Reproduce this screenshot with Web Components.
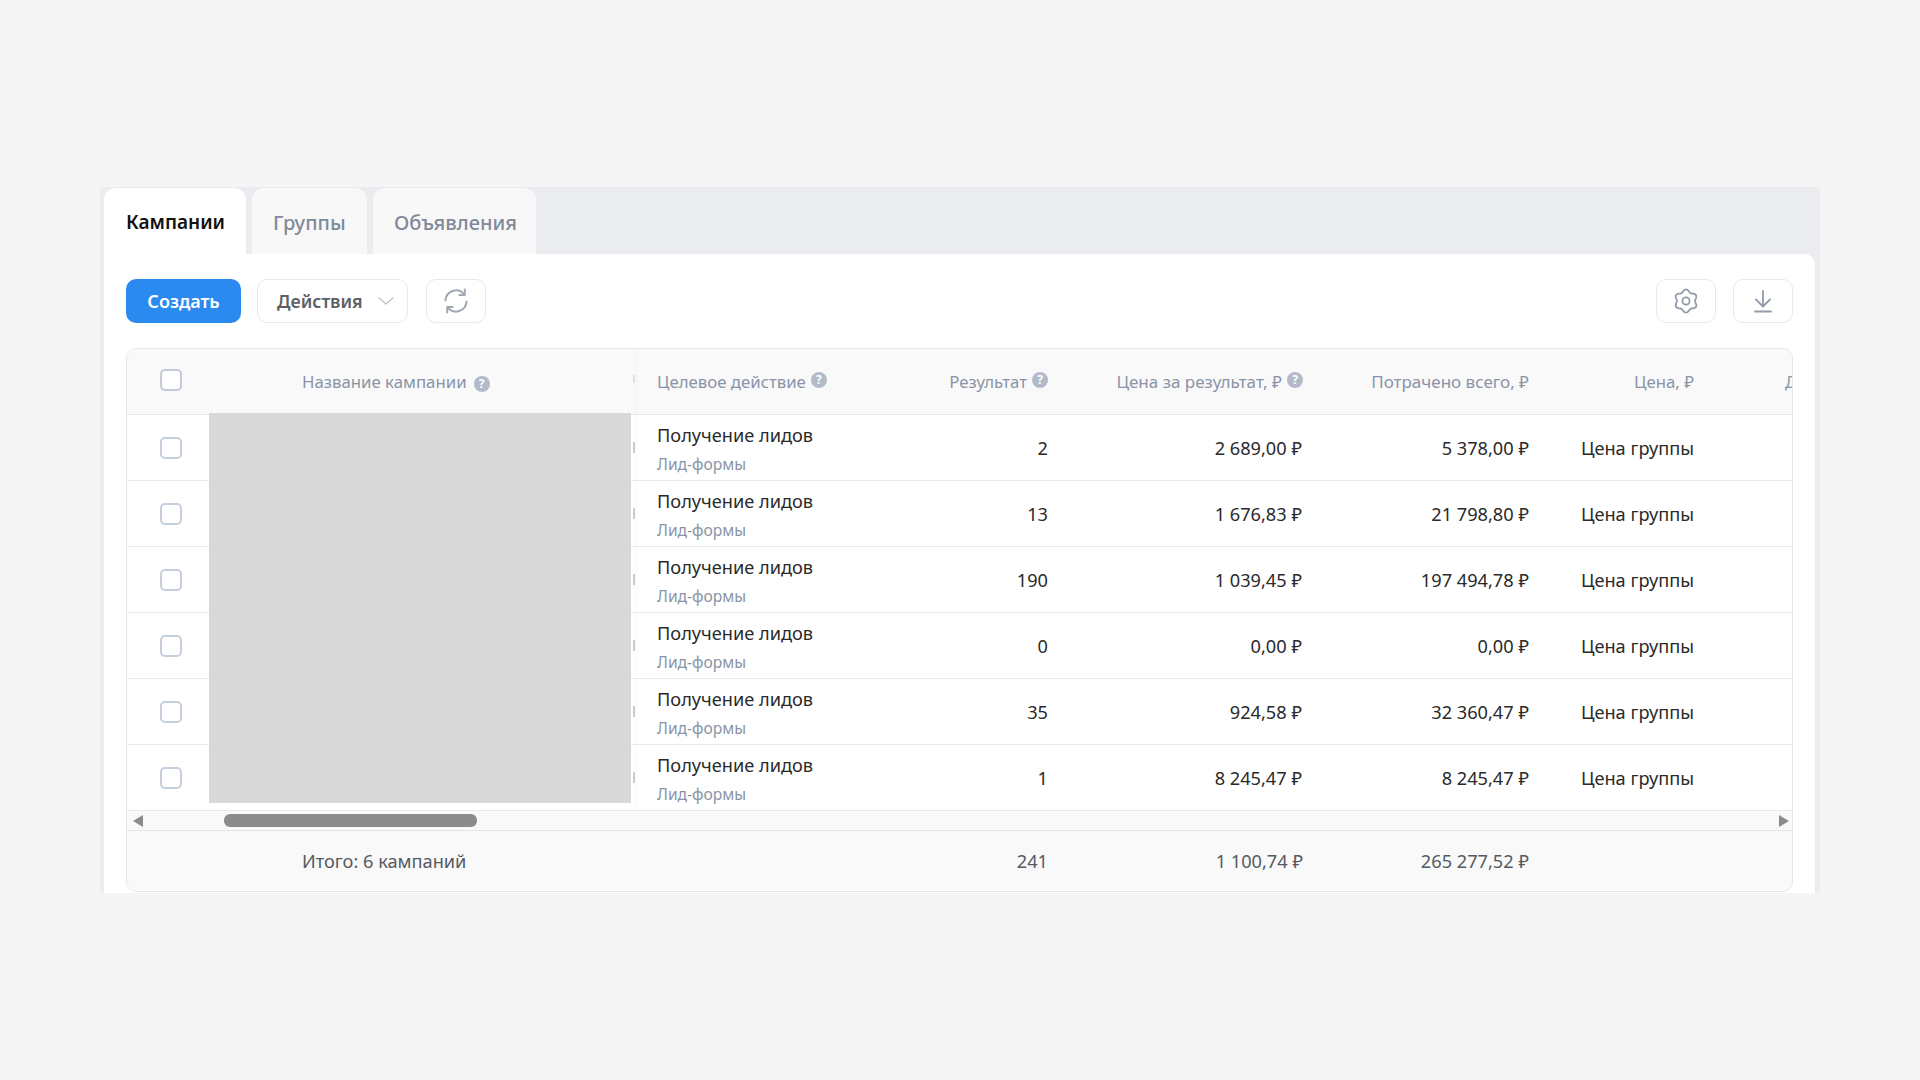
<!DOCTYPE html>
<html lang="ru">
<head>
<meta charset="utf-8">
<title>Кампании</title>
<style>
  html, body { margin: 0; padding: 0; background: #f5f5f6; }
  body { font-family: "Noto Sans", "Open Sans", sans-serif; height: 1080px; overflow: hidden; }
</style>
</head>
<body>
<ads-cabinet>
  <tab-strip slot="tabs"></tab-strip>
  <tool-bar slot="tools"></tool-bar>
  <campaign-table slot="table">
    <campaign-row result="2" price="2 689,00 ₽" spent="5 378,00 ₽"></campaign-row>
    <campaign-row result="13" price="1 676,83 ₽" spent="21 798,80 ₽"></campaign-row>
    <campaign-row result="190" price="1 039,45 ₽" spent="197 494,78 ₽"></campaign-row>
    <campaign-row result="0" price="0,00 ₽" spent="0,00 ₽"></campaign-row>
    <campaign-row result="35" price="924,58 ₽" spent="32 360,47 ₽"></campaign-row>
    <campaign-row result="1" price="8 245,47 ₽" spent="8 245,47 ₽"></campaign-row>
  </campaign-table>
</ads-cabinet>

<script>
const COLS = '82px 424px 2px 220px 217px 255px 226px 165px 1fr';

// gear outline: six soft lobes, one of them on top
function gearPath(cx, cy) {
    let d = '';
    for (let i = 0; i < 120; i++) {
        const a = i / 120 * Math.PI * 2;
        const r = 10.3 + 1.25 * Math.cos(6 * a);
        d += (i ? 'L' : 'M') + (cx + r * Math.sin(a)).toFixed(2) + ' ' + (cy - r * Math.cos(a)).toFixed(2);
    }
    return d + 'Z';
}

class AdsCabinet extends HTMLElement {
    constructor() {
        super();
        this.attachShadow({ mode: 'open' });
        this.shadowRoot.innerHTML = `
            <style>
                :host { display: block; margin: 187px 100px 0; width: 1720px; height: 706px; background: #ebecf0; }
                .panel {
                    margin: 0 5px 0 4px;
                    height: 639px;
                    box-sizing: border-box;
                    background: #fff;
                    border-radius: 0 10px 0 0;
                    padding: 25px 22px 0;
                    display: flex;
                    flex-direction: column;
                    gap: 25px;
                }
            </style>
            <slot name="tabs"></slot>
            <div class="panel">
                <slot name="tools"></slot>
                <slot name="table"></slot>
            </div>
        `;
    }
}
customElements.define('ads-cabinet', AdsCabinet);

class TabStrip extends HTMLElement {
    constructor() {
        super();
        this.attachShadow({ mode: 'open' });
        this.shadowRoot.innerHTML = `
            <style>
                :host { display: flex; gap: 6px; height: 67px; padding-left: 4px; align-items: flex-end; }
                div {
                    height: 66px;
                    box-sizing: border-box;
                    padding: 2px 0 0 21px;
                    display: flex;
                    align-items: center;
                    border-radius: 12px 12px 0 0;
                    background: #f8f8f9;
                    color: #808a9a;
                    font-size: 20px;
                    font-weight: 500;
                }
                .active { background: #fff; color: #111; font-size: 19px; font-weight: 600; padding-left: 22px; width: 142px; }
                .b { width: 115px; }
                .c { width: 163px; }
            </style>
            <div class="active">Кампании</div>
            <div class="b">Группы</div>
            <div class="c">Объявления</div>
        `;
    }
}
customElements.define('tab-strip', TabStrip);

class ToolBar extends HTMLElement {
    constructor() {
        super();
        this.attachShadow({ mode: 'open' });
        this.shadowRoot.innerHTML = `
            <style>
                :host { display: flex; height: 44px; align-items: stretch; }
                button {
                    font: inherit;
                    margin: 0;
                    padding: 0;
                    height: 44px;
                    box-sizing: border-box;
                    border: 1px solid #e6e8ec;
                    border-radius: 10px;
                    background: #fff;
                    display: flex;
                    align-items: center;
                    justify-content: center;
                }
                svg { display: block; fill: none; stroke: #929bab; stroke-width: 1.8; stroke-linecap: round; stroke-linejoin: round; }
                .create { width: 115px; background: #2a8aef; border: none; color: #fff; font-size: 18px; font-weight: 600; margin-right: 16px; }
                .actions { width: 151px; color: #5c5f66; font-size: 17.8px; font-weight: 600; gap: 14px; margin-right: 18px; justify-content: flex-start; padding-left: 19px; }
                .icon { width: 60px; }
                .spacer { flex: 1; }
                .settings { margin-right: 17px; }
            </style>
            <button class="create">Создать</button>
            <button class="actions">Действия
                <svg width="18" height="10" viewBox="0 0 18 10" style="stroke:#bfc4cd;stroke-width:1.5"><path d="M2 2l7 6 7-6"/></svg>
            </button>
            <button class="icon">
                <svg width="28" height="28" viewBox="0 0 28 28" style="stroke:#a0a8b5;stroke-width:2">
                    <path d="M3.5 13.5a10.5 10.5 0 0 1 18.6-6.2"/>
                    <path d="M22.8 2.6v5.4h-5.4"/>
                    <path d="M24.5 14.5a10.5 10.5 0 0 1-18.6 6.2"/>
                    <path d="M5.2 25.4V20h5.4"/>
                </svg>
            </button>
            <div class="spacer"></div>
            <button class="icon settings">
                <svg width="28" height="28" viewBox="0 0 28 28">
                    <path d="${gearPath(14, 14)}"/>
                    <circle cx="14" cy="14" r="3.6"/>
                </svg>
            </button>
            <button class="icon">
                <svg width="26" height="26" viewBox="0 0 26 26">
                    <path d="M13 3v15"/>
                    <path d="M6 11.5l7 7 7-7"/>
                    <path d="M5 23.5h16"/>
                </svg>
            </button>
        `;
    }
}
customElements.define('tool-bar', ToolBar);

class HelpMark extends HTMLElement {
    constructor() {
        super();
        this.attachShadow({ mode: 'open' });
        this.shadowRoot.innerHTML = `
            <style>
                :host {
                    display: inline-flex;
                    width: 16px;
                    height: 16px;
                    border-radius: 50%;
                    background: #b3bbc9;
                    color: #fff;
                    font-size: 12px;
                    font-weight: 700;
                    line-height: 16px;
                    align-items: center;
                    justify-content: center;
                    flex: none;
                }
            </style>?
        `;
    }
}
customElements.define('help-mark', HelpMark);

class CampaignRow extends HTMLElement {
    constructor() {
        super();
        this.attachShadow({ mode: 'open' });
        this.shadowRoot.innerHTML = `
            <style>
                :host {
                    display: grid;
                    grid-template-columns: ${COLS};
                    height: 66px;
                    box-sizing: border-box;
                    border-bottom: 1px solid #e8eaee;
                    color: #2a2a2a;
                    font-size: 18.2px;
                    align-items: center;
                }
                :host(:last-of-type) { border-bottom: none; height: 65px; }
                .box { width: 22px; height: 22px; box-sizing: border-box; border: 2px solid #c6cfdc; border-radius: 5px; margin-left: 33px; background: #fff; }
                .grip { width: 2px; height: 11px; background: #c9ccd2; justify-self: start; }
                .target { padding: 3px 0 0 22px; line-height: 27px; white-space: nowrap; }
                .target small { display: block; font-size: 15.6px; color: #8a94a4; line-height: 24px; margin-top: 3px; }
                .num { text-align: right; padding-right: 24px; white-space: nowrap; }
                .p { padding-right: 25px; }
            </style>
            <div><div class="box"></div></div>
            <div></div>
            <div class="grip"></div>
            <div class="target">Получение лидов<small>Лид-формы</small></div>
            <div class="num r"></div>
            <div class="num p"></div>
            <div class="num s"></div>
            <div class="num">Цена группы</div>
            <div></div>
        `;
    }
    connectedCallback() {
        const r = this.shadowRoot;
        r.querySelector('.r').textContent = this.getAttribute('result');
        r.querySelector('.p').textContent = this.getAttribute('price');
        r.querySelector('.s').textContent = this.getAttribute('spent');
    }
}
customElements.define('campaign-row', CampaignRow);

class CampaignTable extends HTMLElement {
    constructor() {
        super();
        this.attachShadow({ mode: 'open' });
        this.shadowRoot.innerHTML = `
            <style>
                :host {
                    display: block;
                    width: 1667px;
                    height: 544px;
                    box-sizing: border-box;
                    border: 1px solid #e4e6ea;
                    border-radius: 10px;
                    overflow: hidden;
                    position: relative;
                    background: #fff;
                }
                .head, .foot {
                    display: grid;
                    grid-template-columns: ${COLS};
                    background: #f9f9fa;
                    align-items: center;
                    white-space: nowrap;
                }
                .head { height: 66px; box-sizing: border-box; border-bottom: 1px solid #e4e6ea; color: #8a94a6; font-size: 16.8px; }
                .foot { height: 62px; box-sizing: border-box; color: #555a61; border-top: 1px solid #e4e6ea; font-size: 18.2px; padding-bottom: 2px; }
                .box { width: 22px; height: 22px; box-sizing: border-box; border: 2px solid #c2cbd8; border-radius: 5px; margin-left: 33px; background: #fff; position: relative; top: -2px; }
                .name { display: flex; align-items: center; gap: 7px; padding-left: 93px; height: 100%; }
                .name help-mark { position: relative; top: 2px; }
                .th { display: flex; gap: 5px; align-items: center; justify-content: flex-end; padding-right: 24px; }
                .th help-mark { position: relative; top: -2px; }
                .th.left { justify-content: flex-start; padding: 0 0 0 22px; }
                .wide { font-size: 17px; }
                .clip { justify-content: flex-start; padding: 0 0 0 67px; overflow: hidden; }
                .mark { width: 2px; height: 8px; background: #dfe2e8; position: relative; top: -3px; }
                .ft { text-align: right; padding-right: 24px; }
                .fname { padding-left: 93px; }
                .pin { position: absolute; left: 506px; top: 0; width: 1px; height: 460px; box-shadow: 2px 0 4px rgba(40, 50, 70, .05); pointer-events: none; }
                .cover { position: absolute; left: 82px; top: 64px; width: 422px; height: 390px; background: #d8d8d8; }
                .scroll { height: 20px; box-sizing: border-box; background: #f9f9fa; border-top: 1px solid #e8eaee; display: flex; align-items: center; justify-content: space-between; padding: 0 3px 0 6px; position: relative; }
                .scroll i { display: block; width: 0; height: 0; border-top: 6px solid transparent; border-bottom: 6px solid transparent; }
                .scroll .l { border-right: 10px solid #8c8c8c; }
                .scroll .r { border-left: 10px solid #8c8c8c; }
                .thumb { position: absolute; left: 97px; top: 3px; width: 253px; height: 13px; border-radius: 6px; background: #8c8c8c; }
            </style>
            <div class="head">
                <div><div class="box"></div></div>
                <div class="name">Название кампании <help-mark></help-mark></div>
                <div class="mark"></div>
                <div class="th left">Целевое действие <help-mark></help-mark></div>
                <div class="th">Результат <help-mark></help-mark></div>
                <div class="th wide">Цена за результат, ₽ <help-mark></help-mark></div>
                <div class="th wide">Потрачено всего, ₽</div>
                <div class="th">Цена, ₽</div>
                <div class="th clip">Д</div>
            </div>
            <slot></slot>
            <div class="scroll"><i class="l"></i><div class="thumb"></div><i class="r"></i></div>
            <div class="foot">
                <div></div>
                <div class="fname">Итого: 6 кампаний</div>
                <div></div>
                <div></div>
                <div class="ft">241</div>
                <div class="ft">1 100,74 ₽</div>
                <div class="ft">265 277,52 ₽</div>
                <div></div>
                <div></div>
            </div>
            <div class="pin"></div>
            <div class="cover"></div>
        `;
    }
}
customElements.define('campaign-table', CampaignTable);
</script>
</body>
</html>
